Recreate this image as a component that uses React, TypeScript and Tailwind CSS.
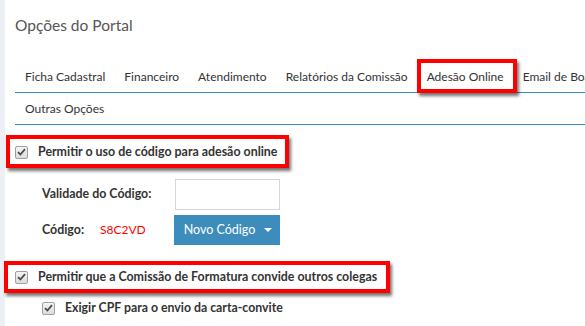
import React from "react";

const tabs = [
  "Ficha Cadastral",
  "Financeiro",
  "Atendimento",
  "Relatórios da Comissão",
  "Adesão Online",
  "Email de Boas-vindas",
];

function Check() {
  return (
    <span className="inline-flex h-[13px] w-[13px] shrink-0 items-center justify-center rounded-[2px] border border-[#a0a0a0] bg-gradient-to-b from-[#f4f4f4] to-[#dcdcdc]">
      <svg width="9" height="8" viewBox="0 0 9 8">
        <path d="M1 4.2 L3.4 6.5 L8 1.2" fill="none" stroke="#4a4a4a" strokeWidth="1.8" />
      </svg>
    </span>
  );
}

function Frame({ className }: { className: string }) {
  return (
    <span
      className={`pointer-events-none absolute border-4 border-[#ff0000] shadow-[2px_3px_3px_rgba(0,0,0,0.55)] ${className}`}
    />
  );
}

export default function App() {
  return (
    <div
      className="flex h-[326px] w-[585px] overflow-hidden bg-white text-[12px] text-[#333]"
      style={{ fontFamily: "Lato, 'Open Sans', sans-serif" }}
    >
      <div className="w-[5px] shrink-0 bg-[#eceff4]" />
      <div className="min-w-0 flex-1 pl-[10px]">
        <h1 className="pt-[14px] text-[15.5px] leading-[22px] text-[#555]">Opções do Portal</h1>

        <div className="mt-[24px]">
          <ul className="flex h-[33px] whitespace-nowrap border-b border-[#3c8dbc]">
            {tabs.map((t, i) => (
              <li
                key={t}
                className={`relative flex h-full shrink-0 items-center pt-[1px] ${i === 0 ? "pl-[10px] pr-[9.5px]" : "px-[9.5px]"}`}
              >
                {t}
                {t === "Adesão Online" && <Frame className="-top-[1px] -bottom-[1px] left-0 right-[-4px]" />}
              </li>
            ))}
          </ul>
          <ul className="flex h-[32px] items-center border-b border-[#3c8dbc]">
            <li className="px-[10px]">Outras Opções</li>
          </ul>
        </div>

        <div className="relative mt-[16px] flex h-[22px] items-center gap-[10px] text-[12.4px] font-bold">
          <Check />
          <span>Permitir o uso de código para adesão online</span>
          <Frame className="-top-[6px] -bottom-[5px] left-[-9px] w-[283px]" />
        </div>

        <div className="ml-[27px] mt-[15px] flex h-[32px] items-center">
          <span className="w-[133px] text-[12.4px] font-bold">Validade do Código:</span>
          <span className="h-[31px] w-[105px] border border-[#d2d6de] bg-white" />
        </div>

        <div className="ml-[27px] mt-[5px] flex h-[30px] items-center">
          <span className="w-[58px] text-[12.4px] font-bold">Código:</span>
          <span className="w-[74px] text-[#ff0000]">S8C2VD</span>
          <button className="flex h-[30px] w-[106px] items-center justify-center gap-[9px] bg-[#3c8dbc] pl-[2px] text-[12.5px] text-white">
            Novo Código
            <span className="h-0 w-0 border-x-[4px] border-t-[4px] border-x-transparent border-t-white" />
          </button>
        </div>

        <div className="relative mt-[21px] flex h-[22px] items-center gap-[10px] text-[12.4px] font-bold">
          <Check />
          <span>Permitir que a Comissão de Formatura convide outros colegas</span>
          <Frame className="-top-[5px] -bottom-[5px] left-[-11px] w-[386px]" />
        </div>

        <div className="ml-[27px] mt-[10px] flex h-[20px] items-center gap-[10px] text-[12.3px] font-bold">
          <Check />
          <span>Exigir CPF para o envio da carta-convite</span>
        </div>
      </div>
    </div>
  );
}
